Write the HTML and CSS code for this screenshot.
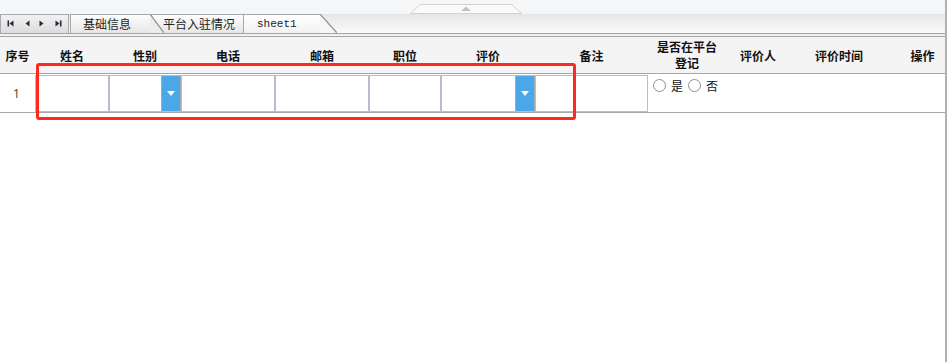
FILE: index.html
```html
<!DOCTYPE html>
<html lang="zh-CN">
<head>
    <meta charset="UTF-8">
    <meta name="viewport" content="width=device-width, initial-scale=1.0">
    <title>sheet1</title>
    <link rel="stylesheet" href="styles.css">
</head>
<body>
    <div class="sheet">
        <div class="topbar">
            <svg class="handle" width="112" height="10" viewBox="0 0 112 10">
                <polygon points="0.5,9.5 10.5,0.5 101.5,0.5 111.5,9.5" fill="#fafafa" stroke="#d2d2d2"/>
                <polygon points="51,7 56,2.5 61,7" fill="#c2c2c2"/>
            </svg>
        </div>
        <div class="tabbar">
            <div class="nav">
                <svg width="67" height="17" viewBox="0 0 67 17">
                    <rect x="6.5" y="5.5" width="1.6" height="6" fill="#1f2d3d"/>
                    <polygon points="12.5,5.5 12.5,11.5 8.5,8.5" fill="#1f2d3d"/>
                    <polygon points="28.5,5.5 28.5,11.5 24.5,8.5" fill="#1f2d3d"/>
                    <polygon points="38.5,5.5 38.5,11.5 42.5,8.5" fill="#1f2d3d"/>
                    <polygon points="54.5,5.5 54.5,11.5 58.5,8.5" fill="#1f2d3d"/>
                    <rect x="58.9" y="5.5" width="1.6" height="6" fill="#1f2d3d"/>
                </svg>
            </div>
            <div class="tabs">
                <div class="tab first">基础信息</div>
                <div class="tab second">平台入驻情况</div>
                <div class="tab active">sheet1</div>
            </div>
        </div>
        <div class="gap"></div>
        <div class="table">
            <div class="head">
                <div class="th">序号</div>
                <div class="th">姓名</div>
                <div class="th">性别</div>
                <div class="th">电话</div>
                <div class="th">邮箱</div>
                <div class="th">职位</div>
                <div class="th">评价</div>
                <div class="th">备注</div>
                <div class="th two">是否在平台<br>登记</div>
                <div class="th">评价人</div>
                <div class="th">评价时间</div>
                <div class="th last">操作</div>
            </div>
            <div class="row">
                <div class="td num">1</div>
                <div class="box"></div>
                <div class="box select"><span class="arrow"></span></div>
                <div class="box"></div>
                <div class="box"></div>
                <div class="box"></div>
                <div class="box select"><span class="arrow"></span></div>
                <div class="box"></div>
                <div class="td radios">
                    <span class="radio"></span><span class="label">是</span>
                    <span class="radio"></span><span class="label">否</span>
                </div>
                <div class="td"></div>
                <div class="td"></div>
                <div class="td"></div>
            </div>
            <div class="mark"></div>
        </div>
    </div>
</body>
</html>
```

FILE: styles.css
```css
* {
    margin: 0;
    padding: 0;
    box-sizing: border-box;
}
body {
    background: white;
    font-family: "Noto Sans CJK SC", "Noto Sans", sans-serif;
    font-size: 12px;
    color: #222;
}
.sheet {
    width: 947px;
    height: 100vh;
    border-right: 2px solid #b0b0b0;
}
.topbar {
    height: 14px;
    background: #f5f6f8;
    display: flex;
    justify-content: center;
    align-items: flex-end;
}
.handle {
    display: block;
    margin-right: 14px;
}
.tabbar {
    height: 20px;
    display: flex;
    background: linear-gradient(#e6e6e6, #fafafa);
    border-bottom: 1px solid #a4a4a4;
}
.nav {
    width: 69px;
    height: 19px;
    border: 1px solid #a8a8a8;
    border-bottom: none;
    background: linear-gradient(#f2f2f2, #dcdcdc);
}
.nav svg {
    display: block;
}
.tabs {
    display: flex;
    margin-left: 1px;
}
.tab {
    position: relative;
    height: 19px;
    line-height: 18px;
    padding-left: 12px;
    border-top: 1px solid #a8a8a8;
    border-left: 1px solid #a8a8a8;
    background: linear-gradient(#fdfdfd, #e6e6e6);
    white-space: nowrap;
}
.tab::after {
    content: '';
    position: absolute;
    top: -1px;
    left: 100%;
    width: 14px;
    height: 19px;
    background: linear-gradient(to bottom left, transparent calc(50% - 1px), #a0a0a0 calc(50% - 0.5px), #a0a0a0 calc(50% + 0.5px), #ececec calc(50% + 1px));
}
.first {
    width: 80px;
    z-index: 3;
}
.second {
    width: 100px;
    z-index: 1;
}
.active {
    width: 77px;
    margin-left: -7px;
    padding-left: 13px;
    z-index: 4;
    background: linear-gradient(#ffffff, #f1f1f1);
    font-family: "Liberation Mono", monospace;
    font-size: 11px;
}
.active::after {
    width: 17px;
    background: linear-gradient(to bottom left, transparent calc(50% - 1px), #a0a0a0 calc(50% - 0.5px), #a0a0a0 calc(50% + 0.5px), #f6f6f6 calc(50% + 1px));
}
.gap {
    height: 2px;
    background: #f1f1f1;
}
.table {
    position: relative;
}
.head, .row {
    display: grid;
    grid-template-columns: 35px 74px 72px 94px 94px 72px 94px 113px 78px 64px 98px 1fr;
}
.head {
    height: 38px;
    background: #f4f4f4;
    border-top: 1px solid #a8a8a8;
    border-bottom: 1px solid #a8a8a8;
}
.th {
    display: flex;
    align-items: center;
    justify-content: center;
    text-align: center;
    font-weight: bold;
    line-height: 16px;
    padding-top: 2px;
    color: #111;
}
.th.two {
    padding-top: 0;
}
.th.last {
    padding-left: 12px;
}
.row {
    height: 39px;
    border-bottom: 1px solid #a8a8a8;
}
.num {
    display: flex;
    align-items: center;
    justify-content: center;
    padding-right: 2px;
    font-family: "Noto Sans", sans-serif;
    color: #5a4a20;
}
.box {
    margin-top: 1px;
    height: 37px;
    border: 1px solid #b8bccb;
    background: white;
}
.select {
    display: flex;
    justify-content: flex-end;
    border-right-color: #a9a9a9;
}
.arrow {
    width: 19px;
    background: #4aa8e8;
    border-left: 1px solid #a9a9a9;
    display: flex;
    align-items: center;
    justify-content: center;
}
.arrow::before {
    content: '';
    border-left: 4.5px solid transparent;
    border-right: 4.5px solid transparent;
    border-top: 5px solid white;
}
.radios {
    display: flex;
    align-items: center;
    align-self: start;
    padding: 4px 0 0 5px;
    height: 18px;
}
.radio {
    width: 13px;
    height: 13px;
    border: 1px solid #8e8e8e;
    border-radius: 50%;
    background: white;
    margin-right: 5px;
}
.label {
    margin-right: 5px;
    color: #111;
}
.mark {
    position: absolute;
    left: 36px;
    top: 27px;
    width: 540px;
    height: 57px;
    border: 3px solid #ff2a1f;
    border-radius: 3px;
}
```
